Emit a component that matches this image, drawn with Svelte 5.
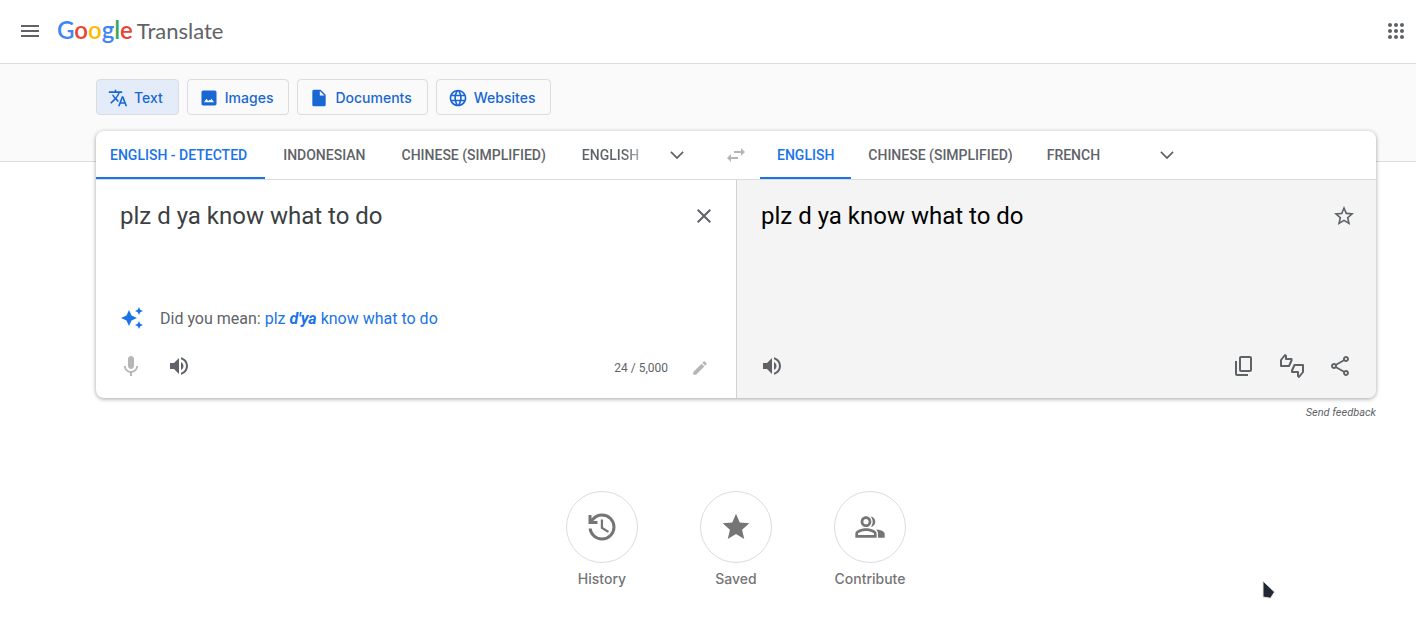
<script>
  const modes = ['Text', 'Images', 'Documents', 'Websites'];
  const brand = [
    ['G', 'blue'], ['o', 'red'], ['o', 'yellow'], ['g', 'blue'], ['l', 'green'], ['e', 'red']
  ];
  const sourceLangs = ['English - Detected', 'Indonesian', 'Chinese (Simplified)', 'English'];
  const targetLangs = ['English', 'Chinese (Simplified)', 'French'];

  let mode = $state('Text');
  let sourceLang = $state(0);
  let targetLang = $state(0);
  let text = $state('plz d ya know what to do');

  const icons = {
    Text: 'M12.87 15.07l-2.54-2.51.03-.03c1.74-1.94 2.98-4.17 3.71-6.53H17V4h-7V2H8v2H1v1.99h11.17C11.5 7.92 10.44 9.75 9 11.35 8.07 10.32 7.3 9.19 6.69 8h-2c.73 1.63 1.73 3.17 2.98 4.56l-5.09 5.02L4 19l5-5 3.11 3.11.76-2.04zM18.5 10h-2L12 22h2l1.12-3h4.75L21 22h2l-4.5-12zm-2.62 7l1.62-4.33L19.12 17h-3.24z',
    Images: 'M21 19V5c0-1.1-.9-2-2-2H5c-1.1 0-2 .9-2 2v14c0 1.1.9 2 2 2h14c1.1 0 2-.9 2-2zM6 17l3-4 2 2.500 1.500-1.500 1 1L15 13l3 4z',
    Documents: 'M6 2c-1.1 0-1.99.9-1.99 2L4 20c0 1.1.89 2 1.99 2H18c1.1 0 2-.9 2-2V8l-6-6H6zm7 7V3.500L18.500 9H13z',
    Websites: 'M11.99 2C6.47 2 2 6.48 2 12s4.47 10 9.99 10C17.52 22 22 17.52 22 12S17.52 2 11.99 2zm6.93 6h-2.95c-.32-1.25-.78-2.45-1.38-3.56 1.84.63 3.37 1.91 4.33 3.56zM12 4.040c.83 1.200 1.480 2.530 1.910 3.960h-3.820c.43-1.430 1.080-2.760 1.910-3.960zM4.260 14C4.100 13.360 4 12.690 4 12s.1-1.360.26-2h3.380c-.08.66-.14 1.320-.14 2s.06 1.340.14 2H4.260zm.82 2h2.950c.32 1.250.78 2.450 1.380 3.560-1.840-.63-3.370-1.900-4.330-3.560zm2.950-8H5.080c.96-1.660 2.490-2.930 4.330-3.560C8.810 5.550 8.350 6.750 8.030 8zM12 19.960c-.83-1.200-1.480-2.530-1.910-3.960h3.820c-.43 1.430-1.080 2.760-1.910 3.960zM14.340 14H9.660c-.09-.66-.16-1.320-.16-2s.07-1.350.16-2h4.680c.09.65.16 1.320.16 2s-.07 1.340-.16 2zm.25 5.560c.6-1.110 1.060-2.310 1.380-3.560h2.950c-.96 1.650-2.490 2.930-4.330 3.560zM16.360 14c.08-.66.14-1.320.14-2s-.06-1.340-.14-2h3.380c.16.64.26 1.310.26 2s-.1 1.360-.26 2h-3.380z',
    menu: 'M3 18h18v-2H3v2zm0-5h18v-2H3v2zm0-7v2h18V6H3z',
    apps: 'M6 8c1.100 0 2-.9 2-2s-.9-2-2-2-2 .9-2 2 .9 2 2 2zm6 0c1.100 0 2-.9 2-2s-.9-2-2-2-2 .9-2 2 .9 2 2 2zm6 0c1.100 0 2-.9 2-2s-.9-2-2-2-2 .9-2 2 .9 2 2 2zM6 14c1.100 0 2-.9 2-2s-.9-2-2-2-2 .9-2 2 .9 2 2 2zm6 0c1.100 0 2-.9 2-2s-.9-2-2-2-2 .9-2 2 .9 2 2 2zm6 0c1.100 0 2-.9 2-2s-.9-2-2-2-2 .9-2 2 .9 2 2 2zM6 20c1.100 0 2-.9 2-2s-.9-2-2-2-2 .9-2 2 .9 2 2 2zm6 0c1.100 0 2-.9 2-2s-.9-2-2-2-2 .9-2 2 .9 2 2 2zm6 0c1.100 0 2-.9 2-2s-.9-2-2-2-2 .9-2 2 .9 2 2 2z',
    chevron: 'M5.410 7.590L4 9l8 8 8-8-1.410-1.410L12 14.170z',
    swap: 'M6.990 11L3 15l3.990 4v-3H14v-2H6.990v-3zM21 9l-3.990-4v3H10v2h7.010v3L21 9z',
    close: 'M19 6.410L17.590 5 12 10.590 6.410 5 5 6.410 10.590 12 5 17.590 6.410 19 12 13.410 17.590 19 19 17.590 13.410 12z',
    sparkle: 'M9 4 11.500 9.500 17 12 11.500 14.500 9 20 6.500 14.500 1 12 6.500 9.500zM19 1 20.200 3.800 23 5 20.200 6.200 19 9 17.800 6.200 15 5 17.800 3.800zM19 15 20.200 17.800 23 19 20.200 20.200 19 23 17.800 20.200 15 19 17.800 17.800z',
    mic: 'M12 15c1.660 0 3-1.340 3-3V5c0-1.660-1.340-3-3-3S9 3.340 9 5v7c0 1.660 1.340 3 3 3zM17.200 12c0 3-2.540 5.100-5.200 5.100S6.800 15 6.800 12H5c0 3.410 2.720 6.230 6 6.720V22h2v-3.280c3.280-.48 6-3.300 6-6.720h-1.800z',
    volume: 'M3 9v6h4l5 5V4L7 9H3zm13.500 3c0-1.770-1.020-3.290-2.500-4.030v8.050c1.480-.73 2.500-2.250 2.500-4.020zM14 3.230v2.060c2.890.86 5 3.540 5 6.710s-2.110 5.850-5 6.710v2.060c4.010-.91 7-4.490 7-8.770s-2.990-7.860-7-8.770z',
    pencil: 'M3 17.250V21h3.750L17.810 9.940l-3.750-3.750L3 17.250zM20.710 7.040c.39-.39.39-1.020 0-1.410l-2.340-2.340c-.39-.39-1.020-.39-1.410 0l-1.830 1.830 3.750 3.750 1.830-1.830z',
    star: 'M12 17.270L18.180 21l-1.640-7.030L22 9.240l-7.190-.61L12 2 9.190 8.630 2 9.240l5.460 4.730L5.820 21z',
    starOutline: 'M22 9.240l-7.190-.62L12 2 9.190 8.630 2 9.240l5.460 4.730L5.820 21 12 17.270 18.180 21l-1.630-7.030L22 9.240zM12 15.400l-3.760 2.270 1-4.280-3.320-2.880 4.380-.38L12 6.100l1.710 4.040 4.380.38-3.320 2.880 1 4.280L12 15.400z',
    copy: 'M18 2H9c-1.100 0-2 .9-2 2v12c0 1.100.9 2 2 2h9c1.100 0 2-.9 2-2V4c0-1.100-.9-2-2-2zm0 14H9V4h9v12zM3 15V7h2v13h11v2H5c-1.100 0-2-.9-2-2v-5z',
    share: 'M18 16.080c-.76 0-1.440.3-1.960.77L8.910 12.700c.05-.23.09-.46.09-.7s-.04-.47-.09-.7l7.050-4.110c.54.5 1.250.81 2.040.81 1.660 0 3-1.340 3-3s-1.340-3-3-3-3 1.340-3 3c0 .24.04.47.09.7L8.040 9.810C7.500 9.310 6.790 9 6 9c-1.660 0-3 1.340-3 3s1.340 3 3 3c.79 0 1.500-.31 2.040-.81l7.120 4.160c-.05.21-.08.43-.08.65 0 1.610 1.310 2.920 2.920 2.920s2.920-1.310 2.920-2.920-1.310-2.920-2.920-2.920zM18 3.900a1.100 1.100 0 1 1 0 2.200 1.100 1.100 0 0 1 0-2.200zM6 13.100a1.100 1.100 0 1 1 0-2.200 1.100 1.100 0 0 1 0 2.200zm12 7a1.100 1.100 0 1 1 0-2.200 1.100 1.100 0 0 1 0 2.200z',
    history: 'M12 21q-3.450 0-6.012-2.288T3.050 13H5.100q.35 2.600 2.313 4.300T12 19q2.925 0 4.963-2.037T19 12t-2.037-4.963T12 5q-1.725 0-3.225.8T6.250 8H9v2H3V4h2v2.350q1.275-1.600 3.113-2.475T12 3q1.875 0 3.513.713t2.850 1.924t1.925 2.850T21 12t-.712 3.513t-1.925 2.850t-2.850 1.925T12 21zM11.200 7h1.500v5.200l4 2.400-.8 1.300-4.700-2.900z',
    people: 'M9 12c2.210 0 4-1.790 4-4s-1.790-4-4-4-4 1.790-4 4 1.790 4 4 4zm0-6c1.100 0 2 .9 2 2s-.9 2-2 2-2-.9-2-2 .9-2 2-2zM9 13c-2.670 0-8 1.340-8 4v3h16v-3c0-2.660-5.330-4-8-4zm6 5H3v-.99C3.200 16.290 6.300 15 9 15s5.800 1.290 6 2v1zM12.510 4.050C13.430 5.110 14 6.490 14 8s-.57 2.890-1.490 3.950C14.470 11.700 16 10.040 16 8s-1.530-3.700-3.490-3.950zM16.530 13.830C17.420 14.660 18 15.700 18 17v3h5v-3c0-1.550-2.110-2.740-6.470-3.170z'
  };

  const shortcuts = [
    { label: 'History', glyph: 'history', size: 36 },
    { label: 'Saved', glyph: 'star', size: 32 },
    { label: 'Contribute', glyph: 'people', size: 32 }
  ];
</script>

{#snippet icon(name, size = 24)}
  <svg width={size} height={size} viewBox="0 0 24 24" aria-hidden="true"><path d={icons[name]} fill-rule={name === 'share' ? 'evenodd' : 'nonzero'} /></svg>
{/snippet}

<header>
  <button class="icon" aria-label="Main menu">{@render icon('menu')}</button>
  <a class="brand" href="#home">
    <span class="google">{#each brand as [letter, colour]}<span class={colour}>{letter}</span>{/each}</span>
    <span>Translate</span>
  </a>
  <button class="icon apps" aria-label="Google apps">{@render icon('apps')}</button>
</header>

<main>
  <nav class="modes">
    {#each modes as name}
      <button class:active={mode === name} onclick={() => (mode = name)}>
        {@render icon(name, 20)}{name}
      </button>
    {/each}
  </nav>

  <section class="card">
    <div class="languages">
      <div class="side source">
        {#each sourceLangs as lang, i}
          <button class="tab" class:selected={sourceLang === i} class:fading={i === 3} onclick={() => (sourceLang = i)}>{lang}</button>
        {/each}
        <button class="icon more" aria-label="More source languages">{@render icon('chevron', 20)}</button>
      </div>
      <button class="icon swap" aria-label="Swap languages">{@render icon('swap')}</button>
      <div class="side target">
        {#each targetLangs as lang, i}
          <button class="tab" class:selected={targetLang === i} onclick={() => (targetLang = i)}>{lang}</button>
        {/each}
        <button class="icon more" aria-label="More target languages">{@render icon('chevron', 20)}</button>
      </div>
    </div>

    <div class="panels">
      <div class="panel">
        <div class="entry">
          <textarea aria-label="Source text" rows="2" spellcheck="false" bind:value={text}></textarea>
          <button class="icon" aria-label="Clear source text" onclick={() => (text = '')}>{@render icon('close')}</button>
        </div>
        <div class="suggestion">
          {@render icon('sparkle')}
          <span>Did you mean: <a href="#suggestion">plz <b>d'ya</b> know what to do</a></span>
        </div>
        <div class="tools">
          <button class="icon faint" aria-label="Translate by voice">{@render icon('mic')}</button>
          <button class="icon" aria-label="Listen to source text">{@render icon('volume')}</button>
          <span class="count">{text.length} / 5,000</span>
          <button class="icon faint pencil" aria-label="Handwriting">{@render icon('pencil', 18)}</button>
        </div>
      </div>
      <div class="panel result">
        <div class="entry">
          <p>plz d ya know what to do</p>
          <button class="icon" aria-label="Save translation">{@render icon('starOutline')}</button>
        </div>
        <div class="tools">
          <button class="icon" aria-label="Listen to translation">{@render icon('volume')}</button>
          <button class="icon copy" aria-label="Copy translation">{@render icon('copy')}</button>
          <button class="icon" aria-label="Rate this translation">
            <svg class="thumbs" width="26" height="26" viewBox="0 0 26 26" aria-hidden="true">
              <path d="M2 13V7l4-5 1 1v3h5.500v1.500L10 13z" />
              <path d="M24 12v7l-4 5-1-1v-4h-6v-1.500L15.500 12z" />
            </svg>
          </button>
          <button class="icon" aria-label="Share translation">{@render icon('share')}</button>
        </div>
      </div>
    </div>
  </section>

  <a class="feedback" href="#feedback">Send feedback</a>

  <nav class="shortcuts">
    {#each shortcuts as { label, glyph, size }}
      <a href="#{label}"><span class="disc">{@render icon(glyph, size)}</span>{label}</a>
    {/each}
  </nav>
</main>

<svg class="pointer" width="14" height="20" viewBox="0 0 14 20" aria-hidden="true">
  <path d="M1 1 12.500 12 8.500 18.200 1 17z" />
</svg>

<style>
  :global(body) { margin: 0; background: #fff; font-family: Roboto, sans-serif; color: #5f6368; }
  button { margin: 0; padding: 0; border: 0; background: none; font: inherit; color: inherit; cursor: pointer; }
  a { color: inherit; text-decoration: none; }
  svg { display: block; flex: none; fill: currentColor; }
  .icon { display: flex; align-items: center; justify-content: center; flex: none; width: 40px; height: 40px; }

  header { display: flex; align-items: center; box-sizing: border-box; height: 64px; padding: 0 0 2px 10px; border-bottom: 1px solid #dadce0; }
  .brand { display: flex; align-items: baseline; gap: 4px; margin-left: 7px; font: 22px/32px Lato, sans-serif; }
  .google { font-size: 24px; font-weight: 600; }
  .blue { color: #4285f4; }
  .red { color: #ea4335; }
  .yellow { color: #fbbc04; }
  .green { color: #34a853; }
  .apps { margin-left: auto; }

  main { padding: 15px 40px 0 96px; background: linear-gradient(#fafafa 97px, #dadce0 97px 98px, transparent 98px); }
  .modes { display: flex; gap: 8px; margin-bottom: 16px; }
  .modes button { display: flex; align-items: center; gap: 6px; box-sizing: border-box; height: 36px; padding: 1px 15px 0 11px; border: 1px solid #dadce0; border-radius: 4px; color: #1967d2; font: 500 14px/20px Inter, sans-serif; }
  .modes .active { background: #e4ecf9; }

  .card { overflow: hidden; border-radius: 8px; background: #fff; box-shadow: 0 1px 4px 0 rgba(0, 0, 0, 0.37); }
  .languages { display: grid; grid-template-columns: 1fr 48px 1fr; height: 48px; border-bottom: 1px solid #dadce0; }
  .side { display: flex; min-width: 0; }
  .tab { box-sizing: border-box; height: 48px; padding: 2px 18px 0; border-bottom: 2px solid transparent; font-size: 14px; font-weight: 500; line-height: 20px; text-transform: uppercase; white-space: nowrap; }
  .source .tab:first-child { padding-left: 14px; }
  .target .tab { padding: 2px 17px 0; }
  .selected { border-color: #1a73e8; color: #1a73e8; }
  .fading:not(.selected) { background: linear-gradient(90deg, #5f6368 65%, #c4c6c8 85%); background-clip: text; color: transparent; }
  .more { height: 48px; }
  .target .more { margin-left: 30px; }
  .swap { width: 48px; height: 48px; color: #b4b6b8; }

  .panels { display: grid; grid-template-columns: 1fr 1fr; }
  .panel { display: flex; flex-direction: column; box-sizing: border-box; min-height: 218px; padding-bottom: 12px; }
  .result { border-left: 1px solid #d0d1d3; background: #f4f4f4; color: #000; }
  .result .icon { color: #5f6368; }
  .entry { display: flex; flex: 1; padding: 16px 12px 0 24px; }
  textarea, p { flex: 1; min-width: 0; margin: 4px 0 0; padding: 0; border: 0; outline: 0; resize: none; background: none; color: #3c4043; font: 24px/32px Roboto, sans-serif; }
  p { color: #000; }
  .suggestion { display: flex; align-items: center; gap: 16px; margin-bottom: 16px; padding: 0 24px; font-size: 16px; line-height: 24px; }
  .suggestion span { padding-top: 2px; line-height: 22px; }
  .suggestion a, .suggestion svg { color: #1a73e8; }
  b { font-style: italic; }
  .tools { display: flex; align-items: center; gap: 8px; padding: 0 16px 0 15px; }
  .faint { color: #b4b6b8; }
  .count { margin: 3px 4px 0 auto; font-size: 12px; line-height: 16px; }
  .pencil { margin-top: 4px; height: 36px; }
  .copy { margin-left: auto; }
  .thumbs { fill: none; stroke: currentColor; stroke-width: 2; stroke-linejoin: round; }

  .feedback { display: block; margin-top: 7px; font-size: 11px; font-style: italic; line-height: 16px; text-align: right; }
  .shortcuts { display: flex; justify-content: center; gap: 62px; margin-top: 70px; color: #757575; font: 500 14px/20px Inter, sans-serif; }
  .shortcuts a { display: flex; flex-direction: column; align-items: center; gap: 6px; width: 72px; }
  .disc { display: flex; align-items: center; justify-content: center; box-sizing: border-box; width: 72px; height: 72px; border: 1px solid #dadce0; border-radius: 50%; }

  .pointer { position: absolute; left: 1262px; top: 580px; fill: #232634; stroke: #e4e4e6; stroke-width: 1; }
</style>
